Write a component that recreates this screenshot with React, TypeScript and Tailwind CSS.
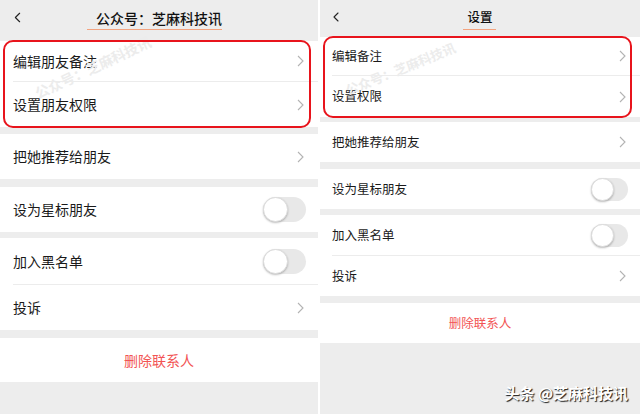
import { ChevronLeft } from 'lucide-react';

const font = { fontFamily: '"Noto Sans CJK SC", "Noto Sans", sans-serif' };

function Chevron() {
  return (
    <svg width="7" height="12" viewBox="0 0 7 12" fill="none">
      <path d="M1 1l5 5-5 5" stroke="#b3b3b3" strokeWidth="1.1" />
    </svg>
  );
}

function Toggle({ big }: { big?: boolean }) {
  return (
    <div
      className={
        big
          ? 'w-[43px] h-[25px] rounded-full bg-[#e8e8e8] flex items-center'
          : 'w-[37px] h-[23px] rounded-full bg-[#e8e8e8] flex items-center'
      }
    >
      <div
        className={
          big
            ? 'w-[25px] h-[25px] rounded-full bg-white border border-[#dcdcdc] shadow-[0_1px_2px_rgba(0,0,0,0.25)]'
            : 'w-[23px] h-[23px] rounded-full bg-white border border-[#dcdcdc] shadow-[0_1px_2px_rgba(0,0,0,0.25)]'
        }
      />
    </div>
  );
}

function LeftPanel() {
  return (
    <div className="relative w-[318px] h-[414px] bg-[#ededed] flex flex-col overflow-hidden text-[14px] text-[#1a1a1a]">
      {/* Header */}
      <div className="relative h-[35px] flex items-center justify-center">
        <ChevronLeft className="absolute left-[9px] top-[9px] w-[17px] h-[17px] text-[#222]" strokeWidth={1.6} />
        <span className="relative font-medium text-[14px] text-[#111] leading-none">
          公众号：芝麻科技讯
          <span className="absolute -left-[9px] right-0 -bottom-[5px] h-px bg-[#f3a37f]" />
        </span>
      </div>

      {/* Highlighted group */}
      <div className="relative mt-[6px] bg-white">
        <div className="h-[40px] flex items-center justify-between pl-[13px] pr-[14px]">
          <span>编辑朋友备注</span>
          <Chevron />
        </div>
        <div className="ml-[13px] h-px bg-[#ececec]" />
        <div className="h-[45px] flex items-center justify-between pl-[13px] pr-[14px]">
          <span>设置朋友权限</span>
          <Chevron />
        </div>
        {/* watermark */}
        <div className="absolute left-[30px] top-[16px] rotate-[-25deg] text-[14px] font-bold text-[#ececec] whitespace-nowrap pointer-events-none">
          公众号：芝麻科技讯
        </div>
        <div className="absolute left-[3px] right-[7px] -top-px -bottom-px border-2 border-[#e8141c] rounded-[10px]" />
      </div>

      <div className="mt-[7px] bg-white h-[45px] flex items-center justify-between pl-[13px] pr-[14px]">
        <span>把她推荐给朋友</span>
        <Chevron />
      </div>

      <div className="mt-[8px] bg-white h-[45px] flex items-center justify-between pl-[13px] pr-[12px]">
        <span>设为星标朋友</span>
        <Toggle big />
      </div>

      <div className="mt-[6px] bg-white">
        <div className="h-[46px] flex items-center justify-between pl-[13px] pr-[12px]">
          <span>加入黑名单</span>
          <Toggle big />
        </div>
        <div className="ml-[13px] h-px bg-[#ececec]" />
        <div className="h-[45px] flex items-center justify-between pl-[13px] pr-[14px]">
          <span>投诉</span>
          <Chevron />
        </div>
      </div>

      <div className="mt-[8px] bg-white h-[44px] flex items-center justify-center text-[#f25454]">
        删除联系人
      </div>
    </div>
  );
}

function RightPanel() {
  return (
    <div className="relative w-[320px] h-[414px] bg-[#ededed] flex flex-col overflow-hidden text-[12.5px] text-[#1a1a1a]">
      {/* Header */}
      <div className="relative h-[35px] flex items-center justify-center">
        <ChevronLeft className="absolute left-[8px] top-[9px] w-[16px] h-[16px] text-[#222]" strokeWidth={1.6} />
        <span className="relative font-medium text-[12.5px] text-[#111] leading-none">
          设置
          <span className="absolute -left-[4px] -right-[3px] -bottom-[6px] h-px bg-[#f3a37f]" />
        </span>
      </div>

      {/* Highlighted group */}
      <div className="relative mt-[2px] bg-white">
        <div className="h-[38px] flex items-center justify-between pl-[12px] pr-[14px]">
          <span>编辑备注</span>
          <Chevron />
        </div>
        <div className="ml-[12px] h-px bg-[#ececec]" />
        <div className="h-[41px] flex items-center justify-between pl-[12px] pr-[14px]">
          <span>设置权限</span>
          <Chevron />
        </div>
        {/* watermark */}
        <div className="absolute left-[22px] top-[22px] rotate-[-22deg] text-[13px] font-bold text-[#ececec] whitespace-nowrap pointer-events-none">
          公众号：芝麻科技讯
        </div>
        <div className="absolute left-[3px] right-[8px] -top-px -bottom-px border-2 border-[#e8141c] rounded-[10px]" />
      </div>

      <div className="mt-[5px] bg-white h-[40px] flex items-center justify-between pl-[12px] pr-[14px]">
        <span>把她推荐给朋友</span>
        <Chevron />
      </div>

      <div className="mt-[7px] bg-white h-[40px] flex items-center justify-between pl-[12px] pr-[12px]">
        <span>设为星标朋友</span>
        <Toggle />
      </div>

      <div className="mt-[6px] bg-white">
        <div className="h-[40px] flex items-center justify-between pl-[12px] pr-[12px]">
          <span>加入黑名单</span>
          <Toggle />
        </div>
        <div className="ml-[12px] h-px bg-[#ececec]" />
        <div className="h-[40px] flex items-center justify-between pl-[12px] pr-[14px]">
          <span>投诉</span>
          <Chevron />
        </div>
      </div>

      <div className="mt-[7px] bg-white h-[40px] flex items-center justify-center text-[#f25454]">
        删除联系人
      </div>

      <div className="flex-1 flex items-end justify-end pr-[12px] pb-[10px]">
        <span className="text-[15px] text-white font-bold [text-shadow:1px_1px_1px_rgba(0,0,0,0.9)]">
          头条 @芝麻科技讯
        </span>
      </div>
    </div>
  );
}

export default function App() {
  return (
    <div className="w-[640px] h-[414px] bg-white flex gap-[2px]" style={font}>
      <LeftPanel />
      <RightPanel />
    </div>
  );
}
